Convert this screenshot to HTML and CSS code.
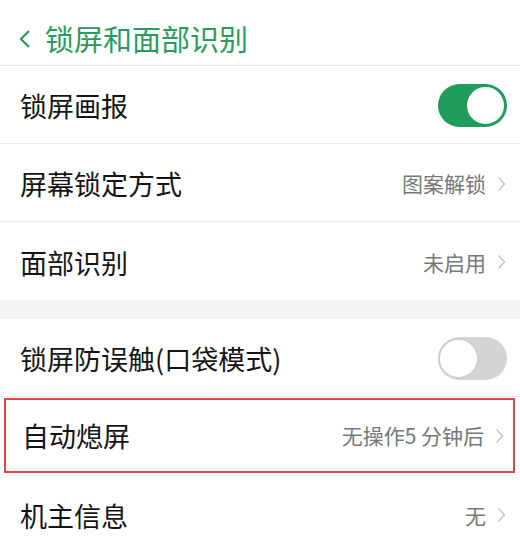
FILE: index.html
```html
<!DOCTYPE html>
<html lang="zh-CN">

<head>
    <meta charset="UTF-8">
    <title>锁屏和面部识别</title>
    <link rel="stylesheet" href="styles.css">
</head>

<body>
    <div class="header">
        <svg class="back" width="14" height="20" viewBox="0 0 14 20">
            <path d="M11 2 L3 10 L11 18" fill="none" stroke="#2a9a5e" stroke-width="2.2" />
        </svg>
        <span class="title">锁屏和面部识别</span>
    </div>

    <div class="group">
        <div class="row">
            <span class="label">锁屏画报</span>
            <div class="switch on"><div class="knob"></div></div>
        </div>
        <div class="row">
            <span class="label">屏幕锁定方式</span>
            <span class="value">图案解锁</span>
            <svg class="arrow" width="9" height="16" viewBox="0 0 9 16">
                <path d="M1.5 1.5 L7.5 8 L1.5 14.5" fill="none" stroke="#c4c4c4" stroke-width="1.4" />
            </svg>
        </div>
        <div class="row last">
            <span class="label">面部识别</span>
            <span class="value">未启用</span>
            <svg class="arrow" width="9" height="16" viewBox="0 0 9 16">
                <path d="M1.5 1.5 L7.5 8 L1.5 14.5" fill="none" stroke="#c4c4c4" stroke-width="1.4" />
            </svg>
        </div>
    </div>

    <div class="gap"></div>

    <div class="group">
        <div class="row">
            <span class="label">锁屏防误触(口袋模式)</span>
            <div class="switch"><div class="knob"></div></div>
        </div>
        <div class="row marked">
            <span class="label">自动熄屏</span>
            <span class="value">无操作5 分钟后</span>
            <svg class="arrow" width="9" height="16" viewBox="0 0 9 16">
                <path d="M1.5 1.5 L7.5 8 L1.5 14.5" fill="none" stroke="#c4c4c4" stroke-width="1.4" />
            </svg>
        </div>
        <div class="row last">
            <span class="label">机主信息</span>
            <span class="value">无</span>
            <svg class="arrow" width="9" height="16" viewBox="0 0 9 16">
                <path d="M1.5 1.5 L7.5 8 L1.5 14.5" fill="none" stroke="#c4c4c4" stroke-width="1.4" />
            </svg>
        </div>
    </div>
</body>

</html>
```

FILE: styles.css
```css
body {
    margin: 0;
    background-color: #fff;
    font-family: "Noto Sans CJK SC", "Noto Sans", sans-serif;
    overflow: hidden;
}

.header {
    height: 66px;
    display: flex;
    align-items: center;
    padding: 12px 0 0 18px;
    box-sizing: border-box;
    border-bottom: 1px solid #e4e4e4;
}

.back {
    margin-right: 13px;
}

.title {
    font-size: 29px;
    color: #2a9a5e;
    line-height: 1;
}

.row {
    height: 77px;
    display: flex;
    align-items: center;
    padding: 2px 13px 0 20px;
    box-sizing: border-box;
    height: 78px;
    border-bottom: 1px solid #ebebeb;
}

.row.last {
    border-bottom: none;
}

.row.marked {
    height: 75px;
    margin: 1px 5px 2px 4px;
    padding: 0 8px 0 16px;
    border: 2px solid #e2464b;
}

.label {
    flex: 1;
    font-size: 27px;
    color: #141414;
    line-height: 1;
}

.value {
    font-size: 21px;
    color: #787878;
    line-height: 1;
    margin-right: 11px;
}

.arrow {
    margin-right: 1px;
}

.gap {
    height: 19px;
    background-color: #f4f4f4;
}

.switch {
    width: 69px;
    height: 43px;
    border-radius: 22px;
    background-color: #d4d4d4;
    display: flex;
    align-items: center;
    box-sizing: border-box;
}

.switch .knob {
    width: 41px;
    height: 41px;
    border-radius: 50%;
    background-color: #fff;
    border: 2px solid #cfcfcf;
    box-sizing: border-box;
}

.switch.on {
    background-color: #1f9d5b;
    justify-content: flex-end;
    padding-right: 1px;
}

.switch.on .knob {
    border-color: #1f9d5b;
}
```
